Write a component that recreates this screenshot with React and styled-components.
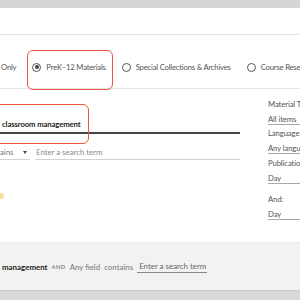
import React from "react";
import styled, { createGlobalStyle } from "styled-components";

const Global = createGlobalStyle`
  html, body { margin: 0; padding: 0; background: #fff; }
  body { overflow: hidden; font-family: Lato, "Liberation Sans", sans-serif; }
`;

const Page = styled.div`
  width: 300px;
  height: 300px;
  display: flex;
  flex-direction: column;
  overflow: hidden;
  background: #fff;
  & > * { flex-shrink: 0; }
`;

const TopBar = styled.div`
  height: 8px;
  background: #d6d6d6;
`;

const Header = styled.div`
  height: 26px;
  border-bottom: 1px solid #e4e4e4;
`;

const TabRow = styled.div`
  height: 54px;
  box-sizing: border-box;
  border-bottom: 1px solid #e4e4e4;
  display: flex;
  align-items: center;
  padding-top: 11px;
  padding-left: 1px;
  gap: 16px;
  white-space: nowrap;
`;

const Option = styled.label`
  position: relative;
  display: flex;
  align-items: center;
  gap: 5px;
  height: 10px;
  font-size: 7.7px;
  letter-spacing: -0.2px;
  color: #555;
  flex-shrink: 0;
  ${(p) =>
    p.$highlight &&
    `
    &::after {
      content: "";
      position: absolute;
      left: -5px;
      right: -7px;
      top: -12px;
      bottom: -18px;
      border: 1.3px solid #ec5440;
      border-radius: 6px;
    }
  `}
`;

const Radio = styled.span`
  width: 7px;
  height: 7px;
  border-radius: 50%;
  border: 1.2px solid #555;
  display: flex;
  align-items: center;
  justify-content: center;
  &::before {
    content: "";
    width: 4.4px;
    height: 4.4px;
    border-radius: 50%;
    background: ${(p) => (p.$checked ? "#444" : "transparent")};
  }
`;

const Main = styled.div`
  display: flex;
  gap: 28px;
  height: 153px;
`;

const LeftCol = styled.div`
  width: 240px;
  display: flex;
  flex-direction: column;
  flex-shrink: 0;
`;

const SearchField = styled.div`
  position: relative;
  margin-top: 28px;
  height: 12px;
  border-bottom: 2px solid #444;
  padding-left: 2px;
  padding-bottom: 3px;
  font-size: 7.7px;
  letter-spacing: -0.1px;
  font-weight: 700;
  color: #222;
  display: flex;
  align-items: flex-end;
`;

const Highlight = styled.div`
  position: absolute;
  left: -20px;
  width: 107px;
  top: -13px;
  height: 38px;
  border: 1.3px solid #ec5440;
  border-radius: 6px;
`;

const QueryRow = styled.div`
  display: flex;
  gap: 5px;
  margin-top: 11px;
`;

const Select = styled.div`
  width: 30px;
  height: 15px;
  border-bottom: 1px solid #d2d2d2;
  display: flex;
  justify-content: space-between;
  align-items: center;
  font-size: 7.8px;
  color: #777;
  padding-right: 3px;
  box-sizing: border-box;
`;

const Caret = styled.span`
  width: 0;
  height: 0;
  border-left: 2.5px solid transparent;
  border-right: 2.5px solid transparent;
  border-top: 3px solid #444;
`;

const Input = styled.div`
  flex: 1;
  height: 15px;
  box-sizing: border-box;
  border-bottom: 1px solid #d2d2d2;
  font-size: 7.8px;
  color: #8a8a8a;
  display: flex;
  align-items: center;
  padding-left: 1px;
`;

const YellowLink = styled.div`
  margin-top: 32px;
  height: 9px;
  line-height: 9px;
  font-size: 6.5px;
  font-weight: 700;
  color: #f6c956;
  letter-spacing: 0.4px;
`;

const RightCol = styled.div`
  width: 80px;
  flex-shrink: 0;
  display: flex;
  flex-direction: column;
  padding-top: 10px;
  font-size: 7.7px;
  letter-spacing: -0.1px;
  color: #555;
`;

const FieldLabel = styled.div`
  height: 10px;
  line-height: 10px;
  white-space: nowrap;
  margin-top: ${(p) => p.$gap || 0}px;
`;

const FieldValue = styled.div`
  height: 10px;
  line-height: 10px;
  margin-top: 5px;
  border-bottom: 1px solid #a8a8a8;
  white-space: nowrap;
`;

const Summary = styled.div`
  height: 48px;
  box-sizing: border-box;
  background: #f2f2f2;
  border-top: 1px solid #ececec;
  display: flex;
  align-items: center;
  padding-left: 2px;
  gap: 4px;
  font-size: 7.9px;
  color: #777;
  white-space: nowrap;
`;

const Strong = styled.span`
  font-weight: 700;
  color: #222;
`;

const Op = styled.span`
  font-size: 5.8px;
  font-weight: 700;
  color: #888;
  letter-spacing: 0.4px;
`;

const SummaryInput = styled.span`
  border-bottom: 1px solid #888;
  padding: 0 1px 1px 2px;
  color: #666;
`;

const Footer = styled.div`
  flex: 1 !important;
  background: #d8d8d8;
  border-top: 1px solid #cacaca;
`;

export default function App() {
  return (
    <Page>
      <Global />
      <TopBar />
      <Header />
      <TabRow>
        <Option>Only</Option>
        <Option $highlight>
          <Radio $checked />
          PreK–12 Materials
        </Option>
        <Option>
          <Radio />
          Special Collections &amp; Archives
        </Option>
        <Option>
          <Radio />
          Course Reserves
        </Option>
      </TabRow>
      <Main>
        <LeftCol>
          <SearchField>
            <Highlight />
            classroom management
          </SearchField>
          <QueryRow>
            <Select>
              ains
              <Caret />
            </Select>
            <Input>Enter a search term</Input>
          </QueryRow>
          <YellowLink>R</YellowLink>
        </LeftCol>
        <RightCol>
          <FieldLabel>Material Type</FieldLabel>
          <FieldValue>All items</FieldValue>
          <FieldLabel $gap={3}>Language</FieldLabel>
          <FieldValue>Any language</FieldValue>
          <FieldLabel $gap={4}>Publication Date</FieldLabel>
          <FieldValue>Day</FieldValue>
          <FieldLabel $gap={10}>And:</FieldLabel>
          <FieldValue>Day</FieldValue>
        </RightCol>
      </Main>
      <Summary>
        <Strong>management</Strong>
        <Op>AND</Op>
        <span>Any field</span>
        <span>contains</span>
        <SummaryInput>Enter a search term</SummaryInput>
      </Summary>
      <Footer />
    </Page>
  );
}
